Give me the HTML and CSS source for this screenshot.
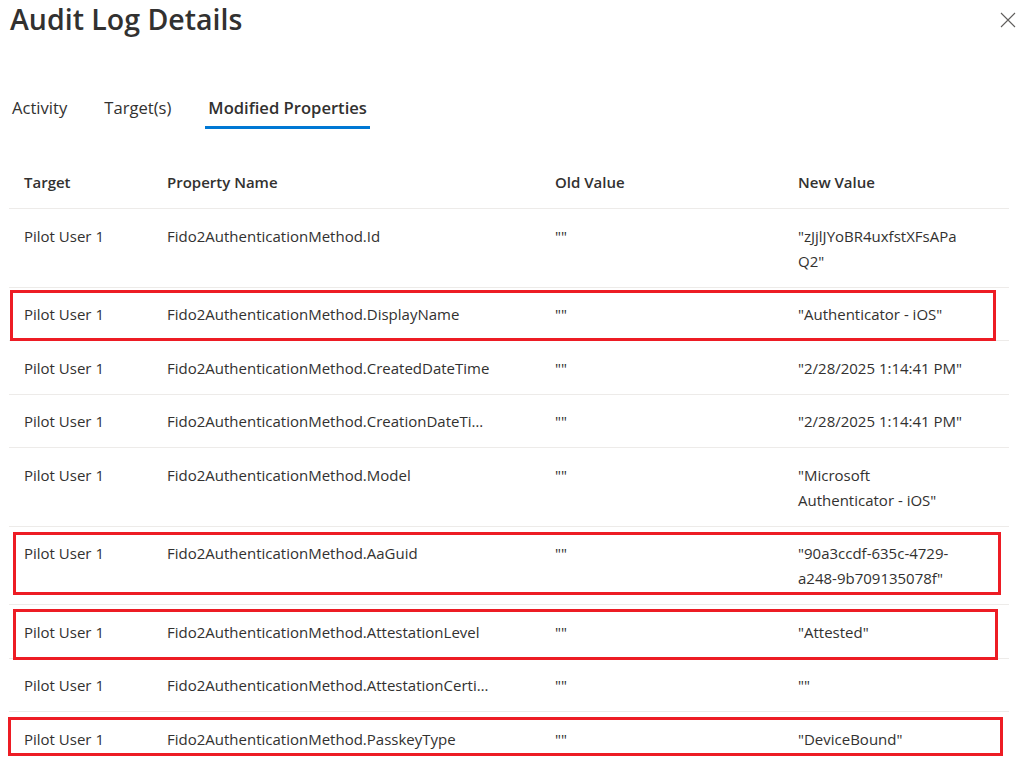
FILE: index.html
```html
<!DOCTYPE html>
<html>

<head>
  <meta charset="utf-8">
  <title>Audit Log Details</title>
  <link rel="stylesheet" href="styles.css">
</head>

<body>

  <div class="panel">

    <div class="panel-head">
      <h1>Audit Log Details</h1>
      <button class="close" title="Close">
        <svg width="16" height="16" viewBox="0 0 16 16">
          <path d="M1 1 L15 15 M15 1 L1 15" stroke="#605e5c" stroke-width="1.1" fill="none" />
        </svg>
      </button>
    </div>

    <div class="tabs">
      <div class="tab">Activity</div>
      <div class="tab">Target(s)</div>
      <div class="tab active">Modified Properties</div>
    </div>

    <table class="props">
      <colgroup>
        <col class="c-target">
        <col class="c-name">
        <col class="c-old">
        <col class="c-new">
      </colgroup>
      <thead>
        <tr>
          <th>Target</th>
          <th>Property Name</th>
          <th>Old Value</th>
          <th>New Value</th>
        </tr>
      </thead>
      <tbody>
        <tr>
          <td>Pilot User 1</td>
          <td class="name">Fido2AuthenticationMethod.Id</td>
          <td>""</td>
          <td class="new">"zJjlJYoBR4uxfstXFsAPaQ2"</td>
        </tr>
        <tr>
          <td>Pilot User 1</td>
          <td class="name">Fido2AuthenticationMethod.DisplayName</td>
          <td>""</td>
          <td class="new">"Authenticator - iOS"</td>
        </tr>
        <tr>
          <td>Pilot User 1</td>
          <td class="name">Fido2AuthenticationMethod.CreatedDateTime</td>
          <td>""</td>
          <td class="new">"2/28/2025 1:14:41 PM"</td>
        </tr>
        <tr>
          <td>Pilot User 1</td>
          <td class="name">Fido2AuthenticationMethod.CreationDateTime</td>
          <td>""</td>
          <td class="new">"2/28/2025 1:14:41 PM"</td>
        </tr>
        <tr>
          <td>Pilot User 1</td>
          <td class="name">Fido2AuthenticationMethod.Model</td>
          <td>""</td>
          <td class="new">"Microsoft Authenticator - iOS"</td>
        </tr>
        <tr>
          <td>Pilot User 1</td>
          <td class="name">Fido2AuthenticationMethod.AaGuid</td>
          <td>""</td>
          <td class="new">"90a3ccdf-635c-4729-a248-9b709135078f"</td>
        </tr>
        <tr>
          <td>Pilot User 1</td>
          <td class="name">Fido2AuthenticationMethod.AttestationLevel</td>
          <td>""</td>
          <td class="new">"Attested"</td>
        </tr>
        <tr>
          <td>Pilot User 1</td>
          <td class="name">Fido2AuthenticationMethod.AttestationCertificates</td>
          <td>""</td>
          <td class="new">""</td>
        </tr>
        <tr>
          <td>Pilot User 1</td>
          <td class="name">Fido2AuthenticationMethod.PasskeyType</td>
          <td>""</td>
          <td class="new">"DeviceBound"</td>
        </tr>
      </tbody>
    </table>

    <!-- red highlight boxes drawn over the rows -->
    <div class="mark mark-display"></div>
    <div class="mark mark-guid"></div>
    <div class="mark mark-level"></div>
    <div class="mark mark-passkey"></div>

  </div>

</body>

</html>
```

FILE: styles.css
```css
html {
  overflow: hidden;
}

body {
  margin: 0;
  background: #fff;
  font-family: "Open Sans", "Noto Sans", sans-serif;
  color: #323130;
}

.panel {
  position: relative;
  padding: 0 15px 0 9px;
}

.panel-head {
  display: flex;
  justify-content: space-between;
  align-items: flex-start;
}

h1 {
  margin: 1px 0 0 1px;
  font-size: 28.5px;
  line-height: 36px;
  font-weight: 600;
}

.close {
  border: none;
  background: none;
  padding: 0;
  margin: 12px -7px 0 0;
  width: 16px;
  height: 16px;
  cursor: pointer;
}

.close svg {
  display: block;
}

/* Tabs */
.tabs {
  display: flex;
  gap: 31px;
  margin-top: 61px;
}

.tab {
  font-size: 16.6px;
  line-height: 20px;
  padding: 0 3px 8px;
  border-bottom: 3px solid transparent;
  cursor: pointer;
}

.tab.active {
  font-weight: 600;
  border-bottom-color: #0078d4;
}

/* Table */
.props {
  margin-top: 27px;
  width: 1000px;
  border-collapse: collapse;
  table-layout: fixed;
  font-size: 15px;
}

.c-target {
  width: 143px;
}

.c-name {
  width: 388px;
}

.c-old {
  width: 243px;
}

.c-new {
  width: 226px;
}

.props th,
.props td {
  text-align: left;
  vertical-align: top;
  padding: 14.5px 15px 13px;
  line-height: 25px;
  border-bottom: 1px solid #edebe9;
}

.props th {
  font-weight: 600;
  padding-top: 14px;
}

.props td.name {
  white-space: nowrap;
  overflow: hidden;
  text-overflow: ellipsis;
  padding-right: 49px;
}

.props td.new {
  padding-right: 43px;
  overflow-wrap: anywhere;
}

/* Highlight boxes */
.mark {
  position: absolute;
  border: 3px solid #ed1c24;
  box-sizing: border-box;
  pointer-events: none;
}

.mark-display {
  left: 10px;
  top: 290px;
  width: 986px;
  height: 51px;
}

.mark-guid {
  left: 13px;
  top: 532px;
  width: 988px;
  height: 63px;
}

.mark-level {
  left: 13px;
  top: 609px;
  width: 985px;
  height: 51px;
}

.mark-passkey {
  left: 8px;
  top: 717px;
  width: 995px;
  height: 39px;
}
```
